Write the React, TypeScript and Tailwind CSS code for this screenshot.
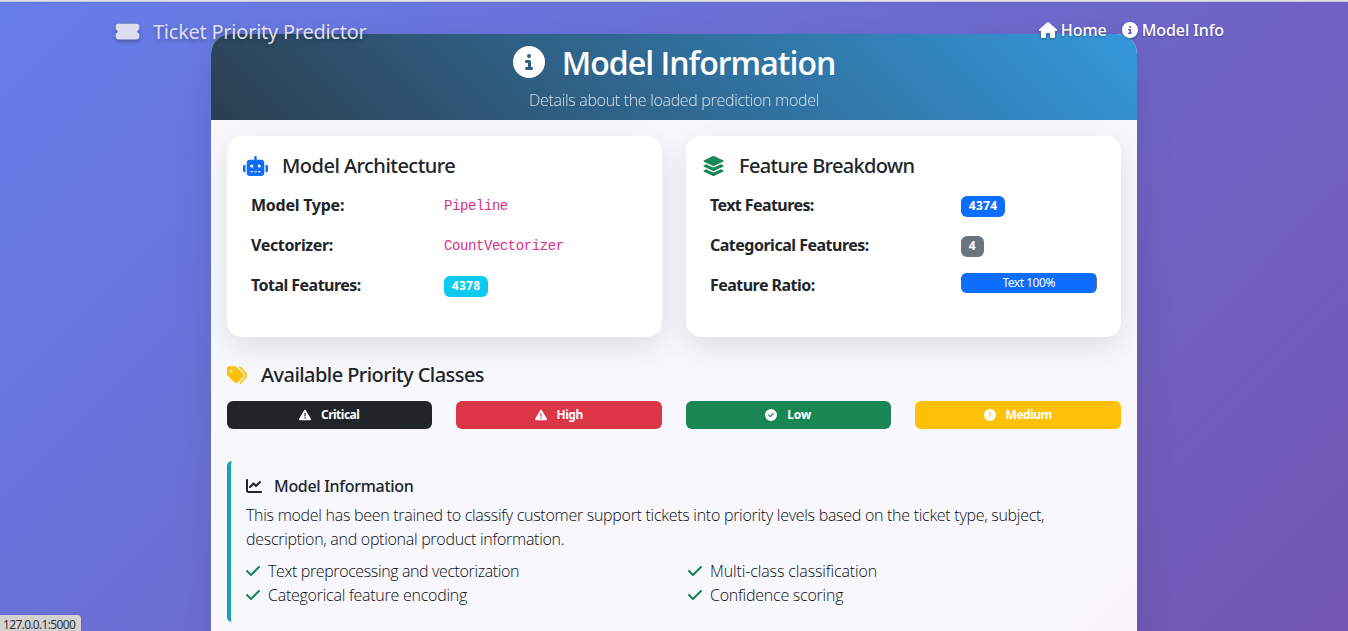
import type { ReactNode } from "react";
import {
  FaChartLine,
  FaCheck,
  FaCircleCheck,
  FaCircleExclamation,
  FaCircleInfo,
  FaHouse,
  FaLayerGroup,
  FaRobot,
  FaTags,
  FaTicketSimple,
  FaTriangleExclamation,
} from "react-icons/fa6";

function Row({ label, track, cols, children }: { label: string; track: string; cols: string; children: ReactNode }) {
  return (
    <div className={`grid h-10 items-center px-2 ${cols}`}>
      <span className={`font-bold ${track}`}>{label}</span>
      <div className="flex items-center">{children}</div>
    </div>
  );
}

function Badge({ color, children }: { color: string; children: ReactNode }) {
  return (
    <span className={`mt-[3px] flex h-[21px] items-center rounded-md px-[7.8px] pb-px text-[12px] leading-none font-bold tracking-[0.3px] text-white ${color}`}>
      {children}
    </span>
  );
}

function Priority({ color, icon, track, label }: { color: string; icon: ReactNode; track: string; label: string }) {
  return (
    <div className={`flex h-7 items-center justify-center gap-[10px] rounded-md pr-px text-[12px] leading-none font-bold text-white ${color}`}>
      {icon}
      <span className={track}>{label}</span>
    </div>
  );
}

function Check({ track, label }: { track: string; label: string }) {
  return (
    <li className="flex h-6 items-center gap-2">
      <FaCheck className="h-4 w-[14px] text-[#198754]" />
      <span className={track}>{label}</span>
    </li>
  );
}

export default function App() {
  const ratio = 99.5;
  return (
    <div className="relative h-[631px] w-[1348px] overflow-hidden bg-[linear-gradient(135deg,#667eea_0%,#764ba2_100%)] bg-[length:1348px_1150px] bg-no-repeat font-['Noto_Sans','Open_Sans',sans-serif] text-[16px] leading-6 text-[#212529]">
      <div className="h-[2px] border-b border-[#c4c6cf] bg-[#e4e5e9]" />

      <nav className="absolute top-[2px] left-0 z-10 flex w-full items-center justify-between px-[116px] pt-[14px]">
        <div className="-ml-px flex items-center gap-[13px] text-[20px] text-[#dddff0] [text-shadow:0_2px_4px_rgba(0,0,0,0.3)]">
          <FaTicketSimple className="mt-[2px] h-[21px] w-[25px] drop-shadow-[0_2px_2px_rgba(0,0,0,0.3)]" />
          <span className="mt-[4px] tracking-[-0.25px]">Ticket Priority Predictor</span>
        </div>
        <div className="mr-[8px] flex items-center gap-[15px] font-medium text-white [text-shadow:0_1px_2px_rgba(0,0,0,0.3)]">
          <span className="flex items-center gap-[4px]">
            <FaHouse className="h-4 w-[18px] drop-shadow-[0_1px_1px_rgba(0,0,0,0.3)]" />
            <span>Home</span>
          </span>
          <span className="flex items-center gap-[4px]">
            <FaCircleInfo className="size-4 drop-shadow-[0_1px_1px_rgba(0,0,0,0.3)]" />
            <span className="tracking-[-0.1px]">Model Info</span>
          </span>
        </div>
      </nav>

      <main className="mx-auto mt-8 h-[720px] w-[926px] overflow-clip rounded-[20px] bg-white/95 shadow-[0_20px_40px_rgba(0,0,0,0.1)]">
        <header className="flex h-[86px] flex-col items-center bg-[linear-gradient(45deg,#2c3e50,#3498db)] text-white">
          <h1 className="mt-[9px] flex h-[38px] items-center gap-[18px] text-[32px] leading-[38px] font-semibold">
            <FaCircleInfo className="size-8" />
            <span className="mt-px -ml-px font-['Open_Sans'] tracking-[-0.97px]">Model Information</span>
          </h1>
          <p className="mt-[7px] font-['Open_Sans'] font-light tracking-[-0.32px] opacity-80">Details about the loaded prediction model</p>
        </header>

        <div className="p-4">
          <div className="grid grid-cols-2 gap-6">
            <section className="h-[201px] rounded-[15px] bg-white p-4 shadow-[0_10px_30px_rgba(0,0,0,0.1)]">
              <h2 className="mt-[2px] flex h-6 items-center gap-[14px] text-[20px] font-medium">
                <FaRobot className="-mt-px h-[20px] w-[25px] text-[#0d6efd]" />
                <span className="tracking-[-0.52px]">Model Architecture</span>
              </h2>
              <div className="mt-[7px]">
                <Row label="Model Type:" track="tracking-[-0.25px]" cols="grid-cols-[193px_1fr]">
                  <code className="mt-[2px] font-['Liberation_Mono'] text-[14px] tracking-[-0.42px] text-[#d63384]">Pipeline</code>
                </Row>
                <Row label="Vectorizer:" track="tracking-[-0.35px]" cols="grid-cols-[193px_1fr]">
                  <code className="mt-[2px] font-['Liberation_Mono'] text-[14px] tracking-[-0.42px] text-[#d63384]">CountVectorizer</code>
                </Row>
                <Row label="Total Features:" track="tracking-[-0.54px]" cols="grid-cols-[193px_1fr]">
                  <Badge color="bg-[#0dcaf0]">4378</Badge>
                </Row>
              </div>
            </section>

            <section className="h-[201px] rounded-[15px] bg-white p-4 shadow-[0_10px_30px_rgba(0,0,0,0.1)]">
              <h2 className="mt-[2px] flex h-6 items-center gap-[14px] text-[20px] font-medium">
                <FaLayerGroup className="-mt-px h-[20px] w-[23px] text-[#198754]" />
                <span className="tracking-[-0.66px]">Feature Breakdown</span>
              </h2>
              <div className="mt-[7px]">
                <Row label="Text Features:" track="tracking-[-0.58px]" cols="grid-cols-[251px_1fr]">
                  <Badge color="bg-[#0d6efd]">4374</Badge>
                </Row>
                <Row label="Categorical Features:" track="tracking-[-0.5px]" cols="grid-cols-[251px_1fr]">
                  <Badge color="bg-[#6c757d]">4</Badge>
                </Row>
                <Row label="Feature Ratio:" track="tracking-[-0.53px]" cols="grid-cols-[251px_1fr]">
                  <div className="mb-1 flex h-5 w-[136px] overflow-hidden rounded-md bg-[#6c757d]">
                    <div className="flex items-center justify-center bg-[#0d6efd] text-[12px] leading-none text-white" style={{ width: `${ratio}%` }}>
                      <span className="tracking-[-0.47px]">Text 100%</span>
                    </div>
                  </div>
                </Row>
              </div>
            </section>
          </div>

          <h2 className="mt-[26px] flex h-6 items-center gap-[14px] text-[20px] font-medium">
            <FaTags className="-mt-px h-[20px] w-[20px] text-[#ffc107]" />
            <span className="tracking-[-0.56px]">Available Priority Classes</span>
          </h2>
          <div className="mt-[14px] -ml-[0.1px] mr-[0.1px] grid grid-cols-4 gap-6">
            <Priority color="bg-[#212529]" icon={<FaTriangleExclamation />} track="tracking-[-0.5px]" label="Critical" />
            <Priority color="bg-[#dc3545]" icon={<FaTriangleExclamation />} track="tracking-[-0.5px]" label="High" />
            <Priority color="bg-[#198754]" icon={<FaCircleCheck />} track="tracking-[-0.1px]" label="Low" />
            <Priority color="bg-[#ffc107]" icon={<FaCircleExclamation />} track="tracking-[-0.5px]" label="Medium" />
          </div>

          <section className="mt-8 h-[161px] rounded-[5px] border-l-4 border-[#17a2b8] pt-[14px] pl-[15px]">
            <h3 className="flex h-[22px] items-center gap-3 font-medium">
              <FaChartLine className="size-4" />
              <span className="tracking-[-0.3px]">Model Information</span>
            </h3>
            <div className="font-['Open_Sans'] font-light text-[#0c0e10]">
              <p className="mt-[6px]">
                <span className="tracking-[-0.28px]">
                  This model has been trained to classify customer support tickets into priority levels based on the ticket type, subject,
                </span>
                <br />
                <span className="tracking-[-0.29px]">description, and optional product information.</span>
              </p>
              <div className="mt-2 grid grid-cols-[442px_1fr]">
                <ul>
                  <Check track="tracking-[-0.38px]" label="Text preprocessing and vectorization" />
                  <Check track="tracking-[-0.25px]" label="Categorical feature encoding" />
                </ul>
                <ul>
                  <Check track="tracking-[-0.12px]" label="Multi-class classification" />
                  <Check track="tracking-[-0.24px]" label="Confidence scoring" />
                </ul>
              </div>
            </div>
          </section>
        </div>
      </main>

      <div className="absolute bottom-0 left-0 z-20 flex h-4 w-[81px] items-center rounded-tr-[3px] bg-[#d2d2d2] pl-[3px] text-[12px] leading-none text-[#333] shadow-[0_0_1px_rgba(0,0,0,0.5)]">
        <span className="mt-[3px] tracking-[-0.67px]">127.0.0.1:5000</span>
      </div>
    </div>
  );
}
